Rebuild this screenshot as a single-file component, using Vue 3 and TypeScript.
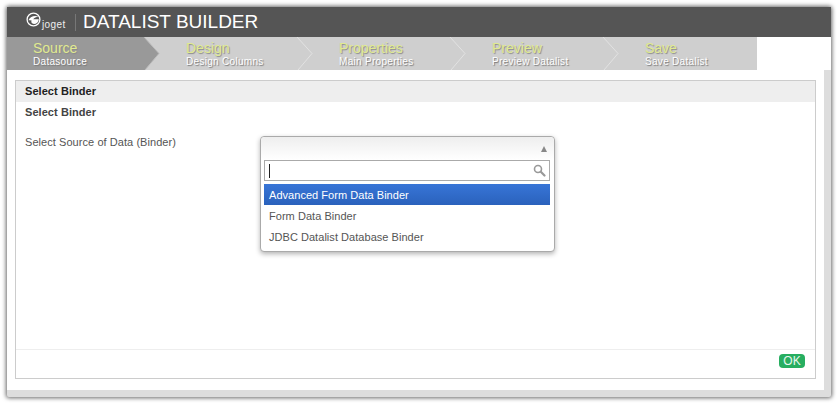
<script setup lang="ts">
const steps = [
  { title: "Source", sub: "Datasource", active: true },
  { title: "Design", sub: "Design Columns", active: false },
  { title: "Properties", sub: "Main Properties", active: false },
  { title: "Preview", sub: "Preview Datalist", active: false },
  { title: "Save", sub: "Save Datalist", active: false },
];

const binders = [
  { name: "Advanced Form Data Binder", selected: true },
  { name: "Form Data Binder", selected: false },
  { name: "JDBC Datalist Database Binder", selected: false },
];
</script>

<template>
  <div class="page">
    <div class="window">
      <header class="header">
        <div class="logo">
          <svg class="logo-mark" width="15" height="15" viewBox="0 0 15 15">
            <circle cx="7.5" cy="7.5" r="6.4" fill="none" stroke="#fff" stroke-width="1.3" />
            <path d="M2.5 8.2 C4.5 4.2 8.5 3.2 12.6 4.6 C10 5 8.2 5.8 7.2 7.2 L12.8 7.2 C12.6 10 10.5 12 8 12 C5.6 12 4.8 10.2 5.6 8.6 C4.4 8.4 3.4 8.2 2.5 8.2 Z" fill="#fff" />
          </svg>
          <span class="logo-text">joget</span>
        </div>
        <h1 class="title">DATALIST BUILDER</h1>
      </header>

      <nav class="steps">
        <div v-for="step in steps" :key="step.title" class="step" :class="{ active: step.active }">
          <div class="step-title">{{ step.title }}</div>
          <div class="step-sub">{{ step.sub }}</div>
          <svg class="chevron" width="18" height="33" viewBox="0 0 18 33">
            <path v-if="step.active" d="M0 0 L1 0 L16 16.500 L2 33 L0 33 Z" fill="#999" />
            <path d="M1 0 L16 16.500 L2 33" fill="none" :stroke="step.active ? '#bdbdbd' : '#e2e2e2'" stroke-width="1" />
          </svg>
        </div>
      </nav>

      <main class="body">
        <section class="panel">
          <div class="panel-title">Select Binder</div>
          <div class="panel-sub">Select Binder</div>

          <div class="field">
            <label class="field-label">Select Source of Data (Binder)</label>
            <div class="select">
              <div class="select-head">
                <span class="select-arrow"></span>
              </div>
              <div class="search">
                <span class="caret"></span>
                <svg width="13" height="13" viewBox="0 0 13 13">
                  <circle cx="5" cy="5" r="3.500" fill="none" stroke="#999" stroke-width="1.600" />
                  <path d="M7.800 7.800 L11.500 11.500" stroke="#999" stroke-width="2.200" stroke-linecap="round" />
                </svg>
              </div>
              <ul class="options">
                <li v-for="b in binders" :key="b.name" class="option" :class="{ selected: b.selected }">{{ b.name }}</li>
              </ul>
            </div>
          </div>

          <footer class="panel-footer">
            <button class="ok" type="button">OK</button>
          </footer>
        </section>
      </main>
    </div>
  </div>
</template>

<style scoped>
.page {
  width: 838px;
  height: 405px;
  box-sizing: border-box;
  padding: 7px 7px 8px 7px;
  background: #fff;
  font-family: "Liberation Sans", Arial, sans-serif;
}

.window {
  width: 824px;
  height: 390px;
  display: flex;
  flex-direction: column;
  box-sizing: border-box;
  background: #ddd;
  padding-right: 7px;
  padding-bottom: 7px;
  box-shadow: 0 0 4px 1px rgba(0, 0, 0, 0.6);
  border-radius: 2px;
}

.header {
  height: 30px;
  margin-right: -7px;
  flex: none;
  display: flex;
  align-items: center;
  background: #555;
  color: #fff;
}

.logo {
  position: relative;
  width: 49px;
  height: 17px;
  margin-left: 19px;
  display: flex;
  align-items: flex-end;
  border-right: 1px solid #777;
}

.logo-mark {
  position: absolute;
  left: 0;
  top: -2px;
}

.logo-text {
  margin-left: 16px;
  font-size: 10px;
  line-height: 13px;
  letter-spacing: 0.4px;
  color: #eee;
}

.title {
  margin: 0 0 0 7px;
  font-size: 19px;
  font-weight: 400;
  line-height: 24px;
  color: #fff;
}

.steps {
  height: 33px;
  flex: none;
  display: flex;
  margin-right: -7px;
  background: #fff;
}

.step {
  position: relative;
  width: 153px;
  height: 33px;
  box-sizing: border-box;
  padding: 3px 0 0 43px;
  background: #cfcfcf;
}

.step:first-child {
  width: 136px;
  padding-left: 26px;
}

.step:last-child {
  width: 155px;
}

.step.active {
  background: #999;
}

.chevron {
  position: absolute;
  top: 0;
  right: -18px;
  z-index: 1;
}

.step:last-child .chevron {
  display: none;
}

.step-title {
  position: relative;
  z-index: 2;
  font-size: 14px;
  line-height: 16px;
  color: #e0ea90;
  text-shadow: 1px 1px 1px #8a8a8a;
}

.step-sub {
  position: relative;
  z-index: 2;
  font-size: 10px;
  line-height: 11px;
  letter-spacing: 0.3px;
  color: #fff;
  text-shadow: 1px 1px 1px #777;
}

.body {
  flex: 1;
  display: flex;
  background: #fff;
  padding: 10px 8px 11px 8px;
  min-height: 0;
}

.panel {
  flex: 1;
  display: flex;
  flex-direction: column;
  border: 1px solid #ccc;
  box-sizing: border-box;
}

.panel-title {
  height: 21px;
  flex: none;
  box-sizing: border-box;
  padding-left: 9px;
  background: #eee;
  font-size: 11px;
  font-weight: 700;
  line-height: 21px;
  letter-spacing: 0.06px;
  color: #222;
}

.panel-sub {
  height: 21px;
  flex: none;
  padding-left: 9px;
  font-size: 11px;
  font-weight: 700;
  line-height: 21px;
  letter-spacing: 0.06px;
  color: #444;
}

.field {
  flex: 1;
  display: flex;
  align-items: flex-start;
  padding: 13px 0 0 9px;
}

.field-label {
  width: 235px;
  flex: none;
  font-size: 11px;
  line-height: 12px;
  letter-spacing: 0.06px;
  color: #555;
}

.select {
  width: 295px;
  height: 116px;
  box-sizing: border-box;
  border: 1px solid #aaa;
  border-radius: 4px;
  background: #fff;
  box-shadow: 0 2px 5px rgba(0, 0, 0, 0.3);
}

.select-head {
  height: 23px;
  display: flex;
  align-items: center;
  justify-content: flex-end;
  padding-right: 7px;
  background: linear-gradient(#eee, #fff);
  border-radius: 4px 4px 0 0;
}

.select-arrow {
  width: 0;
  height: 0;
  border-left: 3.500px solid transparent;
  border-right: 3.500px solid transparent;
  border-bottom: 6px solid #888;
}

.search {
  height: 21px;
  box-sizing: border-box;
  margin: 0 4px 0 3px;
  display: flex;
  align-items: center;
  justify-content: space-between;
  padding: 0 3px 0 4px;
  border: 1px solid #aaa;
  background: #fff;
}

.caret {
  width: 1px;
  height: 14px;
  background: #222;
}

.options {
  list-style: none;
  margin: 3px 4px 0 3px;
  padding: 0;
}

.option {
  height: 21px;
  padding-left: 5px;
  font-size: 11px;
  line-height: 22px;
  letter-spacing: 0.04px;
  color: #555;
}

.option.selected {
  background: linear-gradient(#3875d7, #2a62bc);
  color: #fff;
}

.panel-footer {
  height: 29px;
  flex: none;
  display: flex;
  align-items: flex-start;
  justify-content: flex-end;
  padding: 4px 10px 0 0;
  border-top: 1px solid #eee;
  box-sizing: border-box;
}

.ok {
  width: 26px;
  height: 14px;
  padding: 0;
  border: none;
  border-radius: 4px;
  background: #27ae60;
  color: #e8f8ee;
  font-family: inherit;
  font-size: 12px;
  font-weight: 400;
  line-height: 14px;
}
</style>

<style>
html,
body {
  margin: 0;
  background: #fff;
}
</style>
